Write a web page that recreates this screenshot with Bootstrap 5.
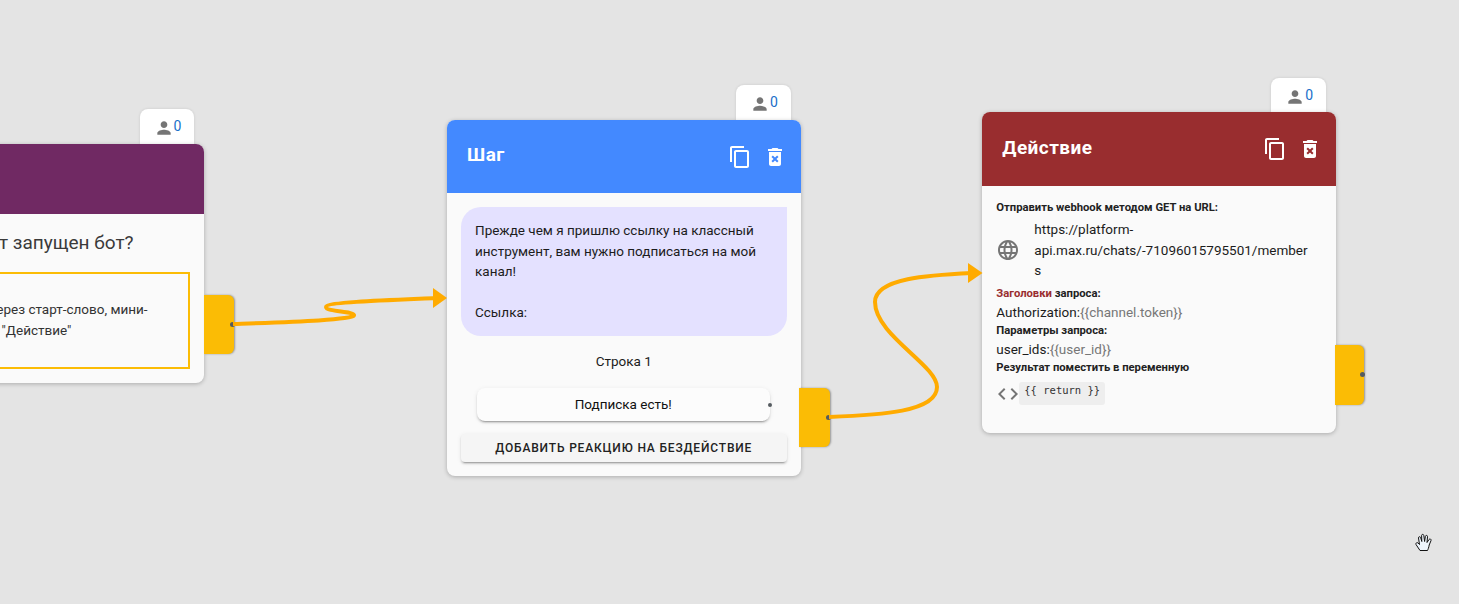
<!DOCTYPE html>
<html lang="ru">
<head>
    <meta charset="UTF-8">
    <title>Сценарий бота</title>
    <link href="https://cdn.jsdelivr.net/npm/bootstrap@5.3.0/dist/css/bootstrap.min.css" rel="stylesheet">
    <style>
        html, body { height: 100%; }
        body {
            font-family: Roboto, "Liberation Sans", sans-serif;
            font-size: 13.5px;
            background-color: #e4e4e4;
            color: #1c1c1c;
            overflow: hidden;
        }
        .flow-canvas { position: relative; width: 1459px; height: 604px; overflow: hidden; }
        .flow-lines { position: absolute; left: 0; top: 0; z-index: 3; pointer-events: none; }
        .flow-node { position: absolute; width: 353.5px; z-index: 2; }
        .node-start { left: -149.5px; top: 144px; }
        .node-step { left: 447px; top: 120px; }
        .node-action { left: 982.300px; top: 112px; }

        .node-card.card {
            background: #fafafa;
            border: 0;
            border-radius: 8px;
            box-shadow: 0 1px 4px rgba(0,0,0,.25);
            position: relative;
            z-index: 1;
        }
        .node-head.card-header {
            border: 0;
            border-radius: 8px 8px 0 0;
            color: #fff;
            padding: 0 14px 0 20px;
            height: 73px;
        }
        .node-action .node-head.card-header { height: 74px; }
        .node-start .node-head.card-header { height: 70px; }
        .head-purple.card-header { background: #702963; }
        .head-blue.card-header { background: #4389ff; }
        .head-red.card-header { background: #992d2f; }
        .node-title { font-size: 19px; font-weight: 700; letter-spacing: .45px; margin: 0 0 2px; }
        .head-icons { gap: 11px; }
        .head-icons svg { width: 24px; height: 24px; fill: #fff; display: block; }

        .users-tab {
            position: absolute;
            right: 10px;
            top: -35px;
            width: 54.500px;
            height: 36px;
            background: #fff;
            border-radius: 8px 8px 0 0;
            box-shadow: 0 0 3px rgba(0,0,0,.12);
            padding: 9px 0 0 14px;
            color: #1a6fc9;
            font-size: 14px;
            line-height: 20px;
        }
        .node-start .users-tab { top: -34.7px; }
        .node-action .users-tab { top: -34.5px; }
        .users-tab svg { width: 20px; height: 20px; fill: #757575; display: block; }
        .users-tab span { margin-top: -2px; }

        .exit-tab {
            position: absolute;
            left: 100%;
            width: 29.5px;
            height: 59px;
            background: #fbbc05;
            border-radius: 0 6px 6px 0;
            box-shadow: 1px 0 2px rgba(0,0,0,.35);
            z-index: 2;
        }
        .node-start .exit-tab { top: 151px; }
        .node-step .exit-tab { top: 268px; margin-left: -1.5px; width: 30.5px; }
        .node-action .exit-tab { top: 233px; height: 60px; margin-left: -1px; }
        .port-dot {
            position: absolute;
            width: 5px;
            height: 5px;
            border-radius: 50%;
            background: #555b60;
            z-index: 4;
        }
        .exit-tab .port-dot { right: -1px; top: 27px; }

        .start-body { padding: 17px 14px 14px; }
        .start-question { font-size: 19px; color: #3a3a3a; text-align: center; line-height: 24px; margin-bottom: 17px; }
        .start-box {
            border: 2px solid #fbbc05;
            height: 97px;
            color: #333;
            text-align: center;
            line-height: 21px;
            padding-top: 25px;
        }

        .step-body { padding: 14px; }
        .msg-bubble {
            background: #e4e1ff;
            border-radius: 20px 0 20px 20px;
            padding: 13px 14px 14px;
            line-height: 20.5px;
            white-space: pre-line;
            height: 129px;
        }
        .row-label { text-align: center; margin-top: 15px; line-height: 20px; }
        .reply-btn {
            position: relative;
            margin: 17px 17px 0 16px;
            height: 33px;
            line-height: 33px;
            text-align: center;
            background: #fcfcfc;
            border-radius: 8px;
            box-shadow: 0 3px 1px -2px rgba(0,0,0,.2), 0 2px 2px 0 rgba(0,0,0,.14), 0 1px 5px 0 rgba(0,0,0,.08);
            color: #111;
        }
        .reply-btn .port-dot { right: -2px; top: 15px; width: 4px; height: 4px; }
        .idle-btn.btn {
            display: block;
            width: 100%;
            height: 28px;
            margin-top: 13px;
            padding: 0;
            background: #f5f5f5;
            border: 0;
            border-radius: 4px;
            box-shadow: 0 3px 1px -2px rgba(0,0,0,.2), 0 2px 2px 0 rgba(0,0,0,.14), 0 1px 5px 0 rgba(0,0,0,.08);
            color: #222;
            font-size: 12px;
            font-weight: 500;
            letter-spacing: .83px;
            text-transform: uppercase;
        }

        .action-body { padding: 13px 14px 27px; line-height: 20.5px; }
        .field-label { font-size: 11.25px; font-weight: 700; line-height: 18px; color: #222; }
        .label-accent { color: #992d2f; }
        .url-row { margin-top: 2px; margin-bottom: 4px; }
        .url-row svg { width: 24px; height: 24px; fill: #757575; flex: none; margin-right: 14px; }
        .url-text { width: 277px; overflow-wrap: anywhere; }
        .kv-line { line-height: 19px; }
        .kv-line span { color: #777; }
        .return-row { margin-top: 5px; }
        .return-row svg { width: 24px; height: 24px; fill: #757575; flex: none; margin-right: -1px; }
        .return-chip {
            background: #eee;
            border-radius: 3px;
            height: 23px;
            padding: 0 5px;
            font-family: "DejaVu Sans Mono", "Liberation Mono", monospace;
            font-size: 10.5px;
            line-height: 17px;
            color: #333;
        }
        .hand-cursor { position: absolute; left: 1415px; top: 533px; width: 19px; height: 19px; z-index: 5; }
    </style>
</head>
<body>
    <div class="flow-canvas">

        <div class="flow-node node-start">
            <div class="users-tab d-flex">
                <svg viewBox="0 0 24 24"><path d="M12 12c2.21 0 4-1.79 4-4s-1.79-4-4-4-4 1.79-4 4 1.79 4 4 4zm0 2c-2.67 0-8 1.34-8 4v2h16v-2c0-2.66-5.33-4-8-4z"/></svg>
                <span>0</span>
            </div>
            <div class="card node-card">
                <div class="card-header node-head head-purple"></div>
                <div class="start-body">
                    <div class="start-question">Как будет запущен бот?</div>
                    <div class="start-box">Запускается через старт-слово, мини-<br>на "Действие"</div>
                </div>
            </div>
            <div class="exit-tab"><i class="port-dot"></i></div>
        </div>

        <div class="flow-node node-step">
            <div class="users-tab d-flex">
                <svg viewBox="0 0 24 24"><path d="M12 12c2.21 0 4-1.79 4-4s-1.79-4-4-4-4 1.79-4 4 1.79 4 4 4zm0 2c-2.67 0-8 1.34-8 4v2h16v-2c0-2.66-5.33-4-8-4z"/></svg>
                <span>0</span>
            </div>
            <div class="card node-card">
                <div class="card-header node-head head-blue d-flex justify-content-between align-items-center">
                    <h2 class="node-title">Шаг</h2>
                    <div class="head-icons d-flex">
                        <svg viewBox="0 0 24 24"><path d="M16 1H4c-1.1 0-2 .9-2 2v14h2V3h12V1zm3 4H8c-1.1 0-2 .9-2 2v14c0 1.1.9 2 2 2h11c1.1 0 2-.9 2-2V7c0-1.1-.9-2-2-2zm0 16H8V7h11v14z"/></svg>
                        <svg viewBox="0 0 24 24"><path d="M6 19c0 1.1.9 2 2 2h8c1.1 0 2-.9 2-2V7H6v12zm2.46-7.12l1.41-1.41L12 12.59l2.12-2.12 1.41 1.41L13.41 14l2.12 2.12-1.41 1.41L12 15.41l-2.12 2.12-1.41-1.41L10.59 14l-2.13-2.12zM15.5 4l-1-1h-5l-1 1H5v2h14V4z"/></svg>
                    </div>
                </div>
                <div class="step-body">
                    <div class="msg-bubble">Прежде чем я пришлю ссылку на классный инструмент, вам нужно подписаться на мой канал!

Ссылка:</div>
                    <div class="row-label">Строка 1</div>
                    <div class="reply-btn">Подписка есть!<i class="port-dot"></i></div>
                    <button type="button" class="btn idle-btn">Добавить реакцию на бездействие</button>
                </div>
            </div>
            <div class="exit-tab"><i class="port-dot"></i></div>
        </div>

        <div class="flow-node node-action">
            <div class="users-tab d-flex">
                <svg viewBox="0 0 24 24"><path d="M12 12c2.21 0 4-1.79 4-4s-1.79-4-4-4-4 1.79-4 4 1.79 4 4 4zm0 2c-2.67 0-8 1.34-8 4v2h16v-2c0-2.66-5.33-4-8-4z"/></svg>
                <span>0</span>
            </div>
            <div class="card node-card">
                <div class="card-header node-head head-red d-flex justify-content-between align-items-center">
                    <h2 class="node-title">Действие</h2>
                    <div class="head-icons d-flex">
                        <svg viewBox="0 0 24 24"><path d="M16 1H4c-1.1 0-2 .9-2 2v14h2V3h12V1zm3 4H8c-1.1 0-2 .9-2 2v14c0 1.1.9 2 2 2h11c1.1 0 2-.9 2-2V7c0-1.1-.9-2-2-2zm0 16H8V7h11v14z"/></svg>
                        <svg viewBox="0 0 24 24"><path d="M6 19c0 1.1.9 2 2 2h8c1.1 0 2-.9 2-2V7H6v12zm2.46-7.12l1.41-1.41L12 12.59l2.12-2.12 1.41 1.41L13.41 14l2.12 2.12-1.41 1.41L12 15.41l-2.12 2.12-1.41-1.41L10.59 14l-2.13-2.12zM15.5 4l-1-1h-5l-1 1H5v2h14V4z"/></svg>
                    </div>
                </div>
                <div class="action-body">
                    <div class="field-label">Отправить webhook методом GET на URL:</div>
                    <div class="url-row d-flex align-items-center">
                        <svg viewBox="0 0 24 24"><path d="M11.99 2C6.47 2 2 6.48 2 12s4.47 10 9.99 10C17.52 22 22 17.52 22 12S17.52 2 11.99 2zm6.93 6h-2.95c-.32-1.25-.78-2.45-1.38-3.56 1.84.63 3.37 1.91 4.33 3.56zM12 4.04c.83 1.2 1.48 2.53 1.91 3.96h-3.82c.43-1.43 1.08-2.76 1.91-3.96zM4.26 14C4.1 13.36 4 12.69 4 12s.1-1.36.26-2h3.38c-.08.66-.14 1.32-.14 2s.06 1.34.14 2H4.26zm.82 2h2.95c.32 1.25.78 2.45 1.38 3.56-1.84-.63-3.37-1.9-4.33-3.56zm2.95-8H5.08c.96-1.66 2.49-2.93 4.33-3.56C8.81 5.55 8.35 6.75 8.03 8zM12 19.96c-.83-1.2-1.48-2.53-1.91-3.96h3.82c-.43 1.43-1.08 2.76-1.91 3.96zM14.34 14H9.66c-.09-.66-.16-1.32-.16-2s.07-1.35.16-2h4.68c.09.65.16 1.32.16 2s-.07 1.34-.16 2zm.25 5.56c.6-1.11 1.06-2.31 1.38-3.56h2.95c-.96 1.65-2.49 2.93-4.33 3.56zM16.36 14c.08-.66.14-1.32.14-2s-.06-1.34-.14-2h3.38c.16.64.26 1.31.26 2s-.1 1.36-.26 2h-3.38z"/></svg>
                        <div class="url-text">https://platform-api.max.ru/chats/-71096015795501/members</div>
                    </div>
                    <div class="field-label"><span class="label-accent">Заголовки</span> запроса:</div>
                    <div class="kv-line">Authorization:<span>{{channel.token}}</span></div>
                    <div class="field-label">Параметры запроса:</div>
                    <div class="kv-line">user_ids:<span>{{user_id}}</span></div>
                    <div class="field-label">Результат поместить в переменную</div>
                    <div class="return-row d-flex align-items-center">
                        <svg viewBox="0 0 24 24"><path d="M9.4 16.6L4.8 12l4.6-4.6L8 6l-6 6 6 6 1.4-1.4zm5.2 0l4.6-4.6-4.6-4.6L16 6l6 6-6 6-1.4-1.4z"/></svg>
                        <div class="return-chip">{{ return }}</div>
                    </div>
                </div>
            </div>
            <div class="exit-tab"><i class="port-dot"></i></div>
        </div>

        <svg class="flow-lines" width="1459" height="604" viewBox="0 0 1459 604">
            <path d="M233 324 C290 322 355 320 354 315 C353 311 326 312 326 307 C326 302 390 300 436 298" fill="none" stroke="#ffab00" stroke-width="4"/>
            <polygon points="447,298 433,288 433,308" fill="#ffab00"/>
            <path d="M829 417 C880 415 937 412 937 387 C937 365 875 335 875 302 C875 278 930 275 972 273" fill="none" stroke="#ffab00" stroke-width="4"/>
            <polygon points="982.500,273 968,263 968,283" fill="#ffab00"/>
        </svg>

        <svg class="hand-cursor" viewBox="0 0 19 19"><path d="M5 17.500 L1 11.500 C.5 10 2 9 3 10 L4.500 11.500 L3.500 5 C3.300 3.500 5.300 3.200 5.700 4.700 L6.800 8.500 L6.600 2.500 C6.600 1 8.700 1 8.800 2.500 L9.600 8.500 L10.400 3.300 C10.700 1.900 12.700 2.200 12.500 3.700 L12 9.500 L14 6.500 C14.800 5.400 16.600 6.200 16 7.600 L14.200 12 C13.800 14.500 13 16.500 12.500 17.500 Z" fill="#eef5fc" stroke="#111" stroke-width="1" stroke-linejoin="round"/></svg>
    </div>

    <script src="https://cdn.jsdelivr.net/npm/bootstrap@5.3.0/dist/js/bootstrap.bundle.min.js"></script>
</body>
</html>
